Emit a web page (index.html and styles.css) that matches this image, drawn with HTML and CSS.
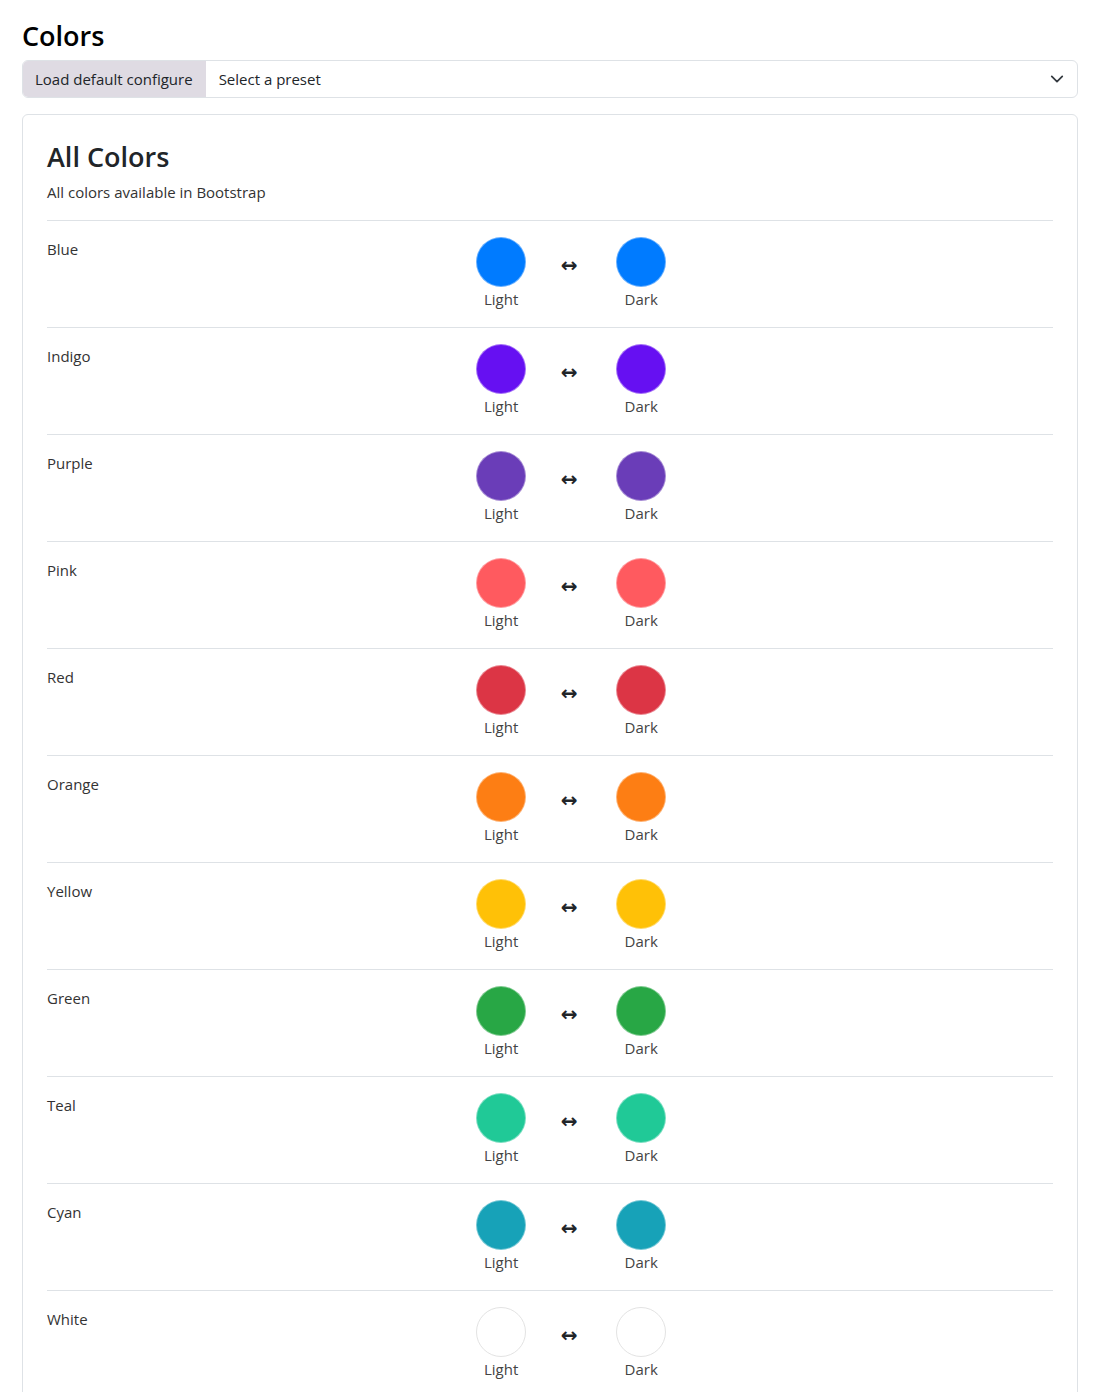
FILE: index.html
```html
<!DOCTYPE html>
<html lang="en">
<head>
<meta charset="utf-8">
<title>Colors</title>
<link rel="stylesheet" href="styles.css">
</head>
<body>
<main class="page">
  <h1 class="page-title">Colors</h1>
  <div class="input-group">
    <span class="addon">Load default configure</span>
    <div class="select">
      <span>Select a preset</span>
      <svg class="chev" width="16" height="16" viewBox="0 0 16 16"><path d="M2 5l6 6 6-6" fill="none" stroke="#343a40" stroke-width="2" stroke-linecap="round" stroke-linejoin="round"/></svg>
    </div>
  </div>
  <section class="card">
    <h2 class="card-title">All Colors</h2>
    <p class="card-sub">All colors available in Bootstrap</p>
    <div class="list">
      <div class="item"><div class="name">Blue</div><div class="pair"><div class="sw"><span class="dot" style="background:#007bff"></span><span class="lbl">Light</span></div><span class="arrow">↔</span><div class="sw"><span class="dot" style="background:#007bff"></span><span class="lbl">Dark</span></div></div></div>
      <div class="item"><div class="name">Indigo</div><div class="pair"><div class="sw"><span class="dot" style="background:#6610f2"></span><span class="lbl">Light</span></div><span class="arrow">↔</span><div class="sw"><span class="dot" style="background:#6610f2"></span><span class="lbl">Dark</span></div></div></div>
      <div class="item"><div class="name">Purple</div><div class="pair"><div class="sw"><span class="dot" style="background:#6a3db8"></span><span class="lbl">Light</span></div><span class="arrow">↔</span><div class="sw"><span class="dot" style="background:#6a3db8"></span><span class="lbl">Dark</span></div></div></div>
      <div class="item"><div class="name">Pink</div><div class="pair"><div class="sw"><span class="dot" style="background:#ff5a5f"></span><span class="lbl">Light</span></div><span class="arrow">↔</span><div class="sw"><span class="dot" style="background:#ff5a5f"></span><span class="lbl">Dark</span></div></div></div>
      <div class="item"><div class="name">Red</div><div class="pair"><div class="sw"><span class="dot" style="background:#dc3545"></span><span class="lbl">Light</span></div><span class="arrow">↔</span><div class="sw"><span class="dot" style="background:#dc3545"></span><span class="lbl">Dark</span></div></div></div>
      <div class="item"><div class="name">Orange</div><div class="pair"><div class="sw"><span class="dot" style="background:#fd7e14"></span><span class="lbl">Light</span></div><span class="arrow">↔</span><div class="sw"><span class="dot" style="background:#fd7e14"></span><span class="lbl">Dark</span></div></div></div>
      <div class="item"><div class="name">Yellow</div><div class="pair"><div class="sw"><span class="dot" style="background:#ffc107"></span><span class="lbl">Light</span></div><span class="arrow">↔</span><div class="sw"><span class="dot" style="background:#ffc107"></span><span class="lbl">Dark</span></div></div></div>
      <div class="item"><div class="name">Green</div><div class="pair"><div class="sw"><span class="dot" style="background:#28a745"></span><span class="lbl">Light</span></div><span class="arrow">↔</span><div class="sw"><span class="dot" style="background:#28a745"></span><span class="lbl">Dark</span></div></div></div>
      <div class="item"><div class="name">Teal</div><div class="pair"><div class="sw"><span class="dot" style="background:#20c997"></span><span class="lbl">Light</span></div><span class="arrow">↔</span><div class="sw"><span class="dot" style="background:#20c997"></span><span class="lbl">Dark</span></div></div></div>
      <div class="item"><div class="name">Cyan</div><div class="pair"><div class="sw"><span class="dot" style="background:#17a2b8"></span><span class="lbl">Light</span></div><span class="arrow">↔</span><div class="sw"><span class="dot" style="background:#17a2b8"></span><span class="lbl">Dark</span></div></div></div>
      <div class="item"><div class="name">White</div><div class="pair"><div class="sw"><span class="dot dot-white" style="background:#ffffff"></span><span class="lbl">Light</span></div><span class="arrow">↔</span><div class="sw"><span class="dot dot-white" style="background:#ffffff"></span><span class="lbl">Dark</span></div></div></div>
    </div>
  </section>
</main>
</body>
</html>
```
FILE: styles.css
```css
* { box-sizing: border-box; }
html, body { margin: 0; padding: 0; background: #fff; }
body {
  font-family: "Open Sans", "Noto Sans", "DejaVu Sans", sans-serif;
  font-size: 15px;
  line-height: 24px;
  color: #212529;
}
.page { padding: 19px 22px 0 22px; }
.page-title {
  margin: 0 0 7px 0;
  font-size: 27px;
  line-height: 34px;
  font-weight: 600;
  color: #000;
}
.input-group {
  display: flex;
  height: 38px;
  border: 1px solid #dee2e6;
  border-radius: 6px;
  overflow: hidden;
}
.addon {
  display: flex;
  align-items: center;
  padding: 0 13px 0 12px;
  background: #dfdbe3;
  color: #212529;
  white-space: nowrap;
}
.select {
  flex: 1;
  display: flex;
  align-items: center;
  justify-content: space-between;
  padding: 0 13px 0 13px;
  color: #212529;
}
.chev { width: 14px; height: 14px; }
.card {
  margin-top: 16px;
  border: 1px solid #dee2e6;
  border-radius: 6px;
  padding: 24px 24px 0 24px;
}
.card-title {
  margin: 0 0 5px 0;
  font-size: 27px;
  line-height: 36px;
  font-weight: 600;
  color: #212529;
}
.card-sub { margin: 0 0 16px 0; color: #333; }
.item {
  display: flex;
  padding: 16px 0;
  border-top: 1px solid #dee2e6;
}
.name {
  flex: 0 0 calc(41.6667% + 10px);
  padding-right: 12px;
  color: #333;
}
.pair {
  display: flex;
  align-items: flex-start;
}
.sw {
  display: flex;
  flex-direction: column;
  align-items: center;
  width: 50px;
}
.dot {
  display: block;
  width: 50px;
  height: 50px;
  border-radius: 50%;
  border: 1px solid rgba(255,255,255,0.4);
}
.dot-white { border-color: #e3e3e3; }
.lbl { color: #444; }
.arrow {
  display: flex;
  align-items: center;
  justify-content: center;
  width: 18px;
  height: 50px;
  margin: 3px 38px 0 34px;
  font-family: "DejaVu Sans", sans-serif;
  font-weight: 700;
  font-size: 20px;
  color: #212529;
}
```
